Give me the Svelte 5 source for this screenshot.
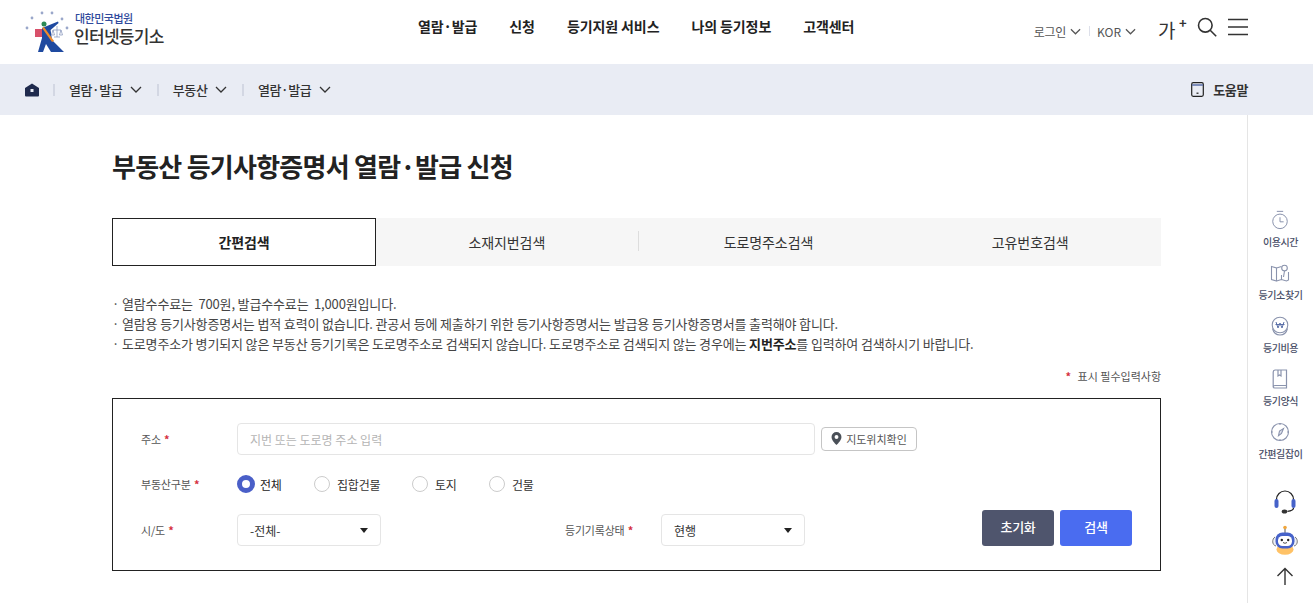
<script>
  const nav = ['열람·발급', '신청', '등기지원 서비스', '나의 등기정보', '고객센터'];
  const crumbs = ['열람·발급', '부동산', '열람·발급'];
  const tabs = ['간편검색', '소재지번검색', '도로명주소검색', '고유번호검색'];
  const radios = ['전체', '집합건물', '토지', '건물'];
</script>

{#snippet chev(w, h)}
  <svg class="chev" width={w} height={h} viewBox="0 0 12 7" fill="none" stroke="currentColor" stroke-width="1.3"><path d="M1 1l5 5 5-5" /></svg>
{/snippet}

<div class="page">
  <header class="top">
    <div class="logo">
      <svg width="48" height="46" viewBox="0 0 48 46">
        <g fill="#9aa7ca">
          <circle cx="3" cy="18" r="1.400" /><circle cx="8" cy="8" r="1.400" /><circle cx="18" cy="3" r="1.400" /><circle cx="28" cy="3" r="1.400" /><circle cx="38" cy="9" r="1.400" /><circle cx="43" cy="18" r="1.400" />
        </g>
        <path d="M11 19h7v8h-7z" fill="#d8506a" />
        <path d="M18 18l16-6.500 .6 1.500-8 7 1.400 10 12 12H27l-5-8-3 8h-5l4-14z" fill="#1f4aa0" />
        <circle cx="20" cy="14" r="2.500" fill="#2b8a55" />
        <path d="M18 18l2-1 10 14-2 1z" fill="#ef8a2a" />
        <path d="M29 20h8M33 16v11M30 27h6M29 20l-1.500 5h3zM37 20l-1.500 5h3z" stroke="#7f8fb8" stroke-width=".7" fill="none" />
      </svg>
      <div class="logo-text">
        <span class="court">대한민국법원</span>
        <span class="site">인터넷등기소</span>
      </div>
    </div>
    <nav class="gnb">
      {#each nav as item}<a href="#top">{item}</a>{/each}
    </nav>
    <div class="util">
      <span class="u-item">로그인 {@render chev(11, 7)}</span>
      <span class="u-sep"></span>
      <span class="u-item kor">KOR {@render chev(11, 7)}</span>
      <span class="font-up">가<sup>+</sup></span>
      <svg class="search" width="20" height="20" viewBox="0 0 20 20" fill="none" stroke="#333" stroke-width="1.600"><circle cx="8.300" cy="8.300" r="6.800" /><path d="M13.200 13.200l6 6" /></svg>
      <svg class="burger" width="20" height="18" viewBox="0 0 20 18" fill="none" stroke="#333" stroke-width="1.500"><path d="M0 1.500h20M0 9h20M0 16.500h20" /></svg>
    </div>
  </header>

  <div class="crumbs">
    <svg class="home" width="14" height="14" viewBox="0 0 14 14"><path d="M7 .5L14 5v7.500a1 1 0 0 1-1 1H1a1 1 0 0 1-1-1V5z" fill="#1f2a4d" /><rect x="5.500" y="6" width="3" height="3" fill="#e9ecf4" /></svg>
    {#each crumbs as c}
      <span class="c-sep"></span>
      <span class="c-item">{c} {@render chev(12, 7)}</span>
    {/each}
    <span class="help">
      <svg width="13" height="15" viewBox="0 0 13 15" fill="none"><rect x=".7" y=".7" width="11.600" height="13.600" rx="1.500" stroke="#222" stroke-width="1.200" /><path d="M1 3h11" stroke="#5a6fa8" stroke-width="1.500" /><rect x="5.500" y="10.500" width="2" height="1.500" fill="#444" /></svg>
      도움말
    </span>
  </div>

  <div class="body">
    <main class="main">
      <h1>부동산 등기사항증명서 열람·발급 신청</h1>

      <div class="tabs">
        {#each tabs as t, i}
          <button class="tab" class:active={i === 0} class:divided={i === 2}>{t}</button>
        {/each}
      </div>

      <ul class="notes">
        <li>열람수수료는&nbsp; 700원, 발급수수료는&nbsp; 1,000원입니다.</li>
        <li>열람용 등기사항증명서는 법적 효력이 없습니다. 관공서 등에 제출하기 위한 등기사항증명서는 발급용 등기사항증명서를 출력해야 합니다.</li>
        <li>도로명주소가 병기되지 않은 부동산 등기기록은 도로명주소로 검색되지 않습니다. 도로명주소로 검색되지 않는 경우에는 <b>지번주소</b>를 입력하여 검색하시기 바랍니다.</li>
      </ul>

      <p class="req"><i>*</i> 표시 필수입력사항</p>

      <form class="box" onsubmit={(e) => e.preventDefault()}>
        <div class="row r1">
          <span class="lab">주소 <i>*</i></span>
          <input class="addr" placeholder="지번 또는 도로명 주소 입력" />
          <button type="button" class="map">
            <svg width="11" height="14" viewBox="0 0 10 13"><path d="M5 0a4.600 4.600 0 0 0-4.600 4.600C.4 8 5 12 5 12s4.600-4 4.600-7.400A4.600 4.600 0 0 0 5 0z" fill="#4a5058" /><circle cx="5" cy="4.600" r="1.800" fill="#fff" /></svg>
            지도위치확인
          </button>
        </div>
        <div class="row r2">
          <span class="lab">부동산구분 <i>*</i></span>
          {#each radios as r, i}
            <span class="radio" class:on={i === 0}><em></em>{r}</span>
          {/each}
        </div>
        <div class="row r3">
          <span class="lab">시/도 <i>*</i></span>
          <div class="sel">-전체-<s></s></div>
          <span class="lab lab2">등기기록상태 <i>*</i></span>
          <div class="sel">현행<s></s></div>
          <div class="btns">
            <button type="button" class="btn dark">초기화</button>
            <button type="button" class="btn blue">검색</button>
          </div>
        </div>
      </form>
    </main>

    <aside class="side">
      <div class="s-item">
        <svg width="20" height="22" viewBox="0 0 20 22" fill="none" stroke="#8a93ad" stroke-width="1.100"><circle cx="10" cy="12.500" r="8" /><path d="M6.500 1.500h7M10 8v5h4" /></svg>
        <span>이용시간</span>
      </div>
      <div class="s-item">
        <svg width="20" height="20" viewBox="0 0 20 20" fill="none" stroke="#8a93ad" stroke-width="1.100"><path d="M1.500 3.500l5 1.500v13l-5-1.500zM6.500 5l5-1.500M6.500 18l5-1.500 5 1.500 2-1V9M11.500 12v4.500" /><circle cx="14.500" cy="5" r="2.800" /><path d="M14.500 8l-1 6" /></svg>
        <span>등기소찾기</span>
      </div>
      <div class="s-item">
        <svg width="20" height="20" viewBox="0 0 20 20" fill="none" stroke="#8a93ad" stroke-width="1.100"><circle cx="10" cy="9" r="7.800" /><path d="M2.500 12.500c1 4 4 6.500 7.500 6.500s6.500-2.500 7.500-6.500" /><path d="M6 6l2 6 2-5 2 5 2-6M5.500 8.500h9" stroke="#5a6fa8" stroke-width="1" /></svg>
        <span>등기비용</span>
      </div>
      <div class="s-item">
        <svg width="16" height="20" viewBox="0 0 16 20" fill="none" stroke="#8a93ad" stroke-width="1.200"><path d="M3 1h11.500v15.500H3A1.800 1.800 0 0 0 1.200 18.300V3A2 2 0 0 1 3 1zM1.200 18c0 .7.700 1 1.800 1h11.500v-2.500" /><path d="M6 1v6l1.500-1L9 7V1" /></svg>
        <span>등기양식</span>
      </div>
      <div class="s-item">
        <svg width="20" height="20" viewBox="0 0 20 20" fill="none" stroke="#8a93ad" stroke-width="1.100"><circle cx="10" cy="10" r="8.500" /><path d="M13.500 6.500l-2 5-3 2.200 1-4.700z" fill="#dfe3ee" /><path d="M10 1.500v1.500M10 17v1.500M1.500 10H3M17 10h1.500" /></svg>
        <span>간편길잡이</span>
      </div>
      <svg class="headset" width="24" height="24" viewBox="0 0 24 24" fill="none">
        <path d="M3.500 11V9.500a8.500 8.500 0 0 1 17 0V11" stroke="#222" stroke-width="1.200" />
        <rect x="1.500" y="9" width="4" height="9" rx="2" fill="#4662c9" />
        <rect x="18.500" y="9" width="4" height="9" rx="2" fill="#4662c9" />
        <path d="M20.500 18c0 2.500-3 3-6 3.300" stroke="#222" stroke-width="1.200" />
        <ellipse cx="11.500" cy="21.500" rx="2.800" ry="2" fill="#333" />
      </svg>
      <svg class="bot" width="26" height="30" viewBox="0 0 26 30">
        <circle cx="13" cy="2.500" r="1.800" fill="#f0a63c" /><path d="M13 4v4" stroke="#555" />
        <path d="M3 12c-3.200 2-3.200 8 1 9M23 12c3.200 2 3.200 8-1 9" stroke="#555" stroke-width=".8" fill="#eef0f5" />
        <ellipse cx="13" cy="24.500" rx="8.500" ry="5.200" fill="#ffc266" />
        <rect x="3.500" y="7.500" width="19" height="16" rx="7" fill="#4662c9" />
        <rect x="6" y="11" width="14" height="10" rx="4.500" fill="#fff" />
        <circle cx="9.800" cy="15" r="1.200" fill="#222" /><circle cx="16.200" cy="15" r="1.200" fill="#222" />
        <path d="M11 17.500q2 1.600 4 0" stroke="#222" stroke-width=".8" fill="none" />
      </svg>
      <svg class="up" width="18" height="18" viewBox="0 0 18 18" fill="none" stroke="#333" stroke-width="1.400"><path d="M9 18V1.500M1.500 9L9 1.500 16.500 9" /></svg>
    </aside>
  </div>
</div>

<style>
  :global(body) {
    margin: 0;
    overflow: hidden;
    background: #fff;
    font-family: "Noto Sans CJK KR", "Noto Sans", sans-serif;
    color: #222;
  }
  .page { width: 1313px; height: 603px; overflow: hidden; display: flex; flex-direction: column; }

  .top { height: 64px; display: flex; align-items: center; padding: 0 65px 0 24px; flex: none; }
  .logo { display: flex; align-items: flex-start; width: 394px; flex: none; height: 50px; margin-top: 6px; }
  .logo-text { display: flex; flex-direction: column; margin-left: 2px; padding-top: 1px; }
  .court { font-size: 11px; line-height: 15px; font-weight: 500; color: #2f4a9c; letter-spacing: -0.5px; margin-left: 1px; }
  .site { font-size: 17px; line-height: 19px; font-weight: 500; color: #333; letter-spacing: -0.7px; }
  .gnb { display: flex; gap: 32px; margin-top: -12px; }
  .gnb a { font-size: 14px; font-weight: 700; color: #222; text-decoration: none; letter-spacing: -0.1px; line-height: 20px; }
  .util { display: flex; align-items: center; margin: -10px 0 0 auto; color: #555; font-size: 12px; }
  .u-item { display: inline-flex; align-items: center; gap: 4px; color: #555; margin-top: 8px; letter-spacing: -0.3px; }
  .u-item.kor { letter-spacing: 0; }
  .u-sep { width: 1px; height: 10px; background: #dde0ea; margin: 8px 7px 0 8px; }
  .font-up { font-size: 19px; color: #333; margin-left: 22px; line-height: 24px; display: inline-block; width: 28px; margin-top: 6px; position: relative; }
  .font-up sup { position: absolute; left: 21px; top: -2px; font-size: 13px; line-height: 13px; font-weight: 700; }
  .search { margin-left: 11px; }
  .burger { margin-left: 11px; }
  .util svg { flex: none; }

  .crumbs { height: 51px; flex: none; background: #e9ecf4; display: flex; align-items: center; padding-left: 25px; font-size: 13px; font-weight: 500; color: #333; }
  .home { margin-right: -1px; }
  .c-sep { width: 2px; height: 12px; background: #d3d7e3; margin: 0 14px 0 15px; }
  .c-item { display: inline-flex; align-items: center; gap: 7.5px; letter-spacing: -0.4px; }
  .help { margin-left: auto; margin-right: 65px; display: inline-flex; align-items: center; gap: 9px; font-weight: 700; letter-spacing: -0.4px; }

  .body { flex: 1; display: flex; min-height: 0; }
  .main { width: 1049px; margin-left: 112px; flex: none; }
  h1 { margin: 31px 0 0; font-size: 26px; line-height: 40px; font-weight: 700; color: #222; letter-spacing: -0.75px; }

  .tabs { display: grid; grid-template-columns: 264px 1fr 1fr 1fr; height: 48px; margin-top: 32px; background: #f6f6f6; }
  .tab { border: 0; background: none; padding: 0; font: inherit; font-size: 14px; letter-spacing: -0.1px; color: #333; font-weight: 400; position: relative; }
  .tab.active { background: #fff; border: 1px solid #222; font-weight: 700; color: #222; }
  .tab.divided::before { content: ""; position: absolute; left: 0; top: 13px; height: 20px; width: 1px; background: #ddd; }

  .notes { list-style: none; margin: 28px 0 0; padding: 0; font-size: 13px; line-height: 20px; color: #444; letter-spacing: -0.15px; }
  .notes li { padding-left: 10px; position: relative; }
  .notes li::before { content: "·"; position: absolute; left: 0; }
  .notes b { font-weight: 700; color: #222; }

  .req { margin: 14px 0 0; text-align: right; font-size: 11px; line-height: 16px; color: #555; }
  .req i, .lab i { font-style: normal; color: #d5303e; font-weight: 700; }
  .req i { margin-right: 4px; }
  .lab i { margin-left: 1px; }

  .box { margin-top: 14px; border: 1px solid #222; height: 173px; box-sizing: border-box; padding: 24px 28px; display: flex; flex-direction: column; }
  .row { display: flex; align-items: center; }
  .lab { width: 96px; flex: none; font-size: 11px; color: #555; letter-spacing: -0.2px; }
  .addr { width: 578px; height: 32px; box-sizing: border-box; border: 1px solid #e5e5e5; border-radius: 4px; padding: 0 12px; font: inherit; font-size: 12px; outline: 0; }
  .addr::placeholder { color: #b5b5b5; }
  .map { margin-left: 6px; width: 96px; height: 24px; box-sizing: border-box; border: 1px solid #c5c5c5; border-radius: 4px; background: #fff; font: inherit; font-size: 11px; color: #555; display: inline-flex; align-items: center; justify-content: center; gap: 4px; padding: 0; }
  .r2 { margin-top: 17px; height: 24px; }
  .radio { display: inline-flex; align-items: center; gap: 7px; font-size: 12px; color: #333; letter-spacing: -0.2px; }
  .radio:nth-of-type(2) { width: 77px; }
  .radio:nth-of-type(3) { width: 98px; }
  .radio:nth-of-type(4) { width: 77px; }
  .radio em { width: 16px; height: 16px; border: 1px solid #ccc; border-radius: 50%; box-sizing: border-box; flex: none; background: #fff; }
  .radio.on em { border: 5px solid #4a5fc8; width: 18px; height: 18px; }
  .radio.on { color: #222; gap: 5px; }
  .r3 { margin-top: 14px; height: 36px; align-items: flex-end; }
  .r3 .lab { align-self: center; margin-top: 4px; }
  .lab2 { margin-left: 184px; }
  .sel { width: 144px; height: 32px; box-sizing: border-box; border: 1px solid #e5e5e5; border-radius: 4px; padding: 0 12px; display: flex; align-items: center; justify-content: space-between; font-size: 12px; color: #333; }
  .sel s { width: 0; height: 0; border-left: 4px solid transparent; border-right: 4px solid transparent; border-top: 5px solid #222; }
  .btns { margin-left: auto; display: flex; gap: 6px; }
  .btn { width: 72px; height: 36px; border: 0; border-radius: 3px; color: #fff; font: inherit; font-size: 13px; font-weight: 500; letter-spacing: -0.3px; padding: 0 0 3px; }
  .dark { background: #4f556d; }
  .blue { background: #4a6cf0; }

  .side { margin-left: 86px; width: 65px; flex: none; border-left: 1px solid #e5e5e5; display: flex; flex-direction: column; align-items: center; padding-top: 95px; }
  .s-item { height: 53px; display: flex; flex-direction: column; align-items: center; gap: 5px; }
  .s-item svg { height: 20px; }
  .s-item span { font-size: 10px; line-height: 14px; color: #4a5068; font-weight: 500; letter-spacing: -0.4px; white-space: nowrap; }
  .headset { margin: 15px 0 0 8px; }
  .bot { margin: 11px 0 0 8px; }
  .up { margin: 12px 0 0 8px; }
</style>
